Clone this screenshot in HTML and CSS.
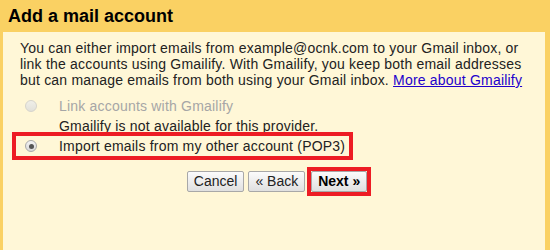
FILE: index.html
```html
<!DOCTYPE html>
<html>
<head>
<meta charset="utf-8">
<link rel="stylesheet" href="styles.css">
</head>
<body>
<div class="title">Add a mail account</div>
<div class="panel">
  <p class="intro">You can either import emails from example@ocnk.com to your Gmail inbox, or link the accounts using Gmailify. With Gmailify, you keep both email addresses but can manage emails from both using your Gmail inbox. <a href="#" class="link">More about Gmailify</a></p>
  <div class="options">
    <div class="row disabled"><span class="radio radio-disabled"></span><span>Link accounts with Gmailify</span></div>
    <div class="row note">Gmailify is not available for this provider.</div>
    <div class="row-wrap"><div class="row marked"><span class="radio radio-checked"></span><span>Import emails from my other account (POP3)</span></div></div>
  </div>
  <div class="buttons">
    <button class="btn">Cancel</button>
    <button class="btn">« Back</button>
    <span class="next-mark"><button class="btn btn-next">Next »</button></span>
  </div>
</div>
</body>
</html>
```
FILE: styles.css
```css
html, body {
  margin: 0;
  padding: 0;
  height: 250px;
  overflow: hidden;
}
body {
  background: #fad163;
  font-family: "Liberation Sans", Arial, sans-serif;
  font-size: 14px;
  color: #222;
  display: flex;
  flex-direction: column;
}
.title {
  font-size: 18px;
  font-weight: bold;
  line-height: 21px;
  padding: 6px 8px 5px;
  color: #000;
}
.panel {
  flex: 1;
  margin: 0 5px 0 3px;
  background: #fff7d7;
  padding: 8px 15px 0 17px;
}
.intro {
  margin: 0;
  line-height: 16px;
  letter-spacing: 0.2px;
}
.link {
  color: #2200cc;
  text-decoration: underline;
}
.options {
  margin: 8px 0 0 -4px;
  letter-spacing: 0.2px;
}
.row {
  display: flex;
  align-items: center;
  height: 20px;
  padding-left: 9px;
}
.row-wrap {
  display: block;
}
.row.marked {
  display: inline-flex;
  padding-right: 4px;
  outline: 4px solid #ed1c24;
}
.disabled {
  color: #a6a6a6;
}
.note {
  padding-left: 43px;
}
.radio {
  width: 10px;
  height: 10px;
  border-radius: 50%;
  margin-right: 22px;
  position: relative;
  flex: none;
}
.radio-disabled {
  border: 1px solid #d6d4cc;
  background: linear-gradient(#f0efe8, #e2e1da);
}
.radio-checked {
  border: 1px solid #a9a9a9;
  background: linear-gradient(#f4f4f4, #d8d8d8);
}
.radio-checked::after {
  content: "";
  position: absolute;
  left: 2.5px;
  top: 2.5px;
  width: 5px;
  height: 5px;
  border-radius: 50%;
  background: #555;
}
.buttons {
  display: flex;
  justify-content: center;
  align-items: center;
  margin-top: 15px;
  margin-left: 2px;
}
.btn {
  font-family: "Liberation Sans", Arial, sans-serif;
  font-size: 14px;
  color: #222;
  height: 21px;
  padding: 0 6px;
  margin: 0 2px;
  border: 1px solid #a8a8a8;
  border-radius: 2px;
  background: linear-gradient(#fbfbfb, #e0e0e0);
  line-height: 19px;
}
.next-mark {
  display: inline-flex;
  margin-left: 4px;
  outline: 4px solid #ed1c24;
}
.btn-next {
  font-weight: bold;
  color: #000;
  margin: 0;
}
```
